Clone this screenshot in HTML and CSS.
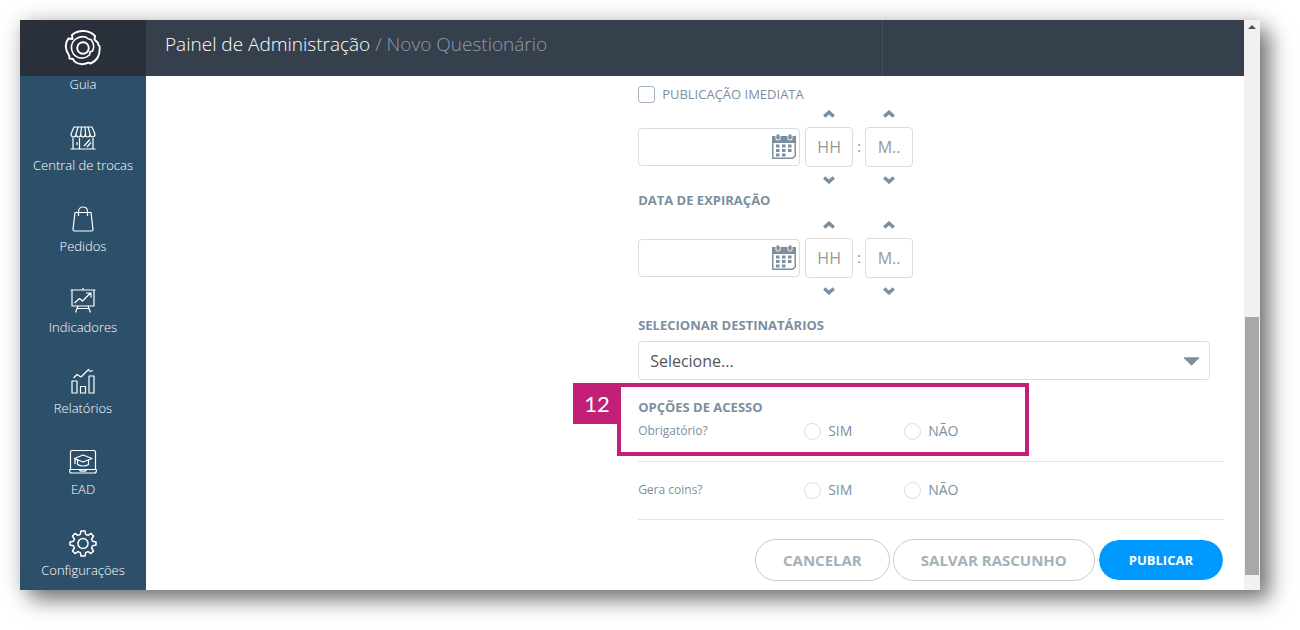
FILE: index.html
```
<!DOCTYPE html>
<html lang="pt-BR">

<head>
    <meta charset="UTF-8">
    <meta name="viewport" content="width=device-width, initial-scale=1.0">
    <title>Novo Questionário</title>
    <link rel="stylesheet" href="styles.css">
</head>

<body>
    <svg class="symbols" width="0" height="0">
        <symbol id="calendar" viewBox="0 0 26 26">
            <path d="M1 3h24v19l-4 3H1z" fill="#fff" />
            <path fill="currentColor" d="M1 2h24v7H1zM1 9h1.500v14.500H20V25H1zM23.500 9H25v13l-3 3h-2v-1.500h1.500l2-2z" />
            <path d="M7 2v2M19 2v2" stroke="#fff" stroke-width="5" stroke-linecap="round" />
            <path d="M7 2v2M19 2v2" stroke="currentColor" stroke-width="3.400" stroke-linecap="round" />
            <path fill="currentColor" d="M5 10.500h3.500v3H5zm6 0h3.500v3H11zm6 0h3.500v3H17zM5 15h3.500v3H5zm6 0h3.500v3H11zm6 0h3.500v3H17zM5 19.500h3.500v3H5zm6 0h3.500v3H11z" />
        </symbol>
        <symbol id="up" viewBox="0 0 12 8">
            <path d="M1.200 6.500L6 2.200l4.800 4.300" fill="none" stroke="currentColor" stroke-width="3.400" />
        </symbol>
        <symbol id="down" viewBox="0 0 12 8">
            <path d="M1.200 1.500L6 5.800l4.800-4.300" fill="none" stroke="currentColor" stroke-width="3.400" />
        </symbol>
    </svg>

    <div class="window">
        <aside class="sidebar">
            <a class="logo" href="#" aria-label="Início">
                <svg width="38" height="38" viewBox="0 0 38 38">
                    <path d="M8 6C14 .500 25 .500 31 7l-.500 3.500 3.500 3.500c.500 1.500-.500 2 1.500 3 1 9-3 15-9 17.500l-2-.800c-5 2.300-10 2-14-1.200l-1.500-2.500-3.500-.500c-.500-2 .500-2-.700-3.500C.500 20 1 13.500 4.500 9.500l4 .500z" stroke-width="1.900" />
                    <path d="M11 10.500C16 6.500 22 7 24.500 10l2.500.500c3 4 3.500 8 1.500 11.500l-2.500 1-.500 3c-5 4.500-12 4-16-1-3.500-5-2.500-11 1.500-14.500z" stroke-width="1.600" />
                    <circle cx="19" cy="19" r="5.800" stroke-width="1.900" />
                </svg>
            </a>
            <nav class="menu">
                <a href="#">Guia</a>
                <a href="#">
                    <svg viewBox="0 0 28 28">
                        <path d="M5 3h18l3 7c0 4-5 4-5 0 0 4-4.700 4-4.700 0 0 4-4.600 4-4.600 0 0 4-4.700 4-4.700 0 0 4-5 4-5 0zM9 3L7 10M12.500 3l-.800 7M16 3l.600 7M19 3l2 7M1.500 25h25M4 14v11M10.500 14v11M24 14v11M8 18v3M15 22l6-6.500M18 23l4-4.500" />
                    </svg>
                    Central de trocas
                </a>
                <a href="#">
                    <svg viewBox="0 0 28 28">
                        <path d="M6 7.500h16l2 17c0 1-.500 1.500-1.500 1.500h-17C4.500 26 4 25.500 4 24.500zM9.500 11V6.500c0-6 9-6 9 0V11" />
                    </svg>
                    Pedidos
                </a>
                <a href="#">
                    <svg viewBox="0 0 28 28">
                        <path d="M1.500 4h25M14 2v2M3 4v16h22V4M9 20l-2.500 6.500M19 20l2.500 6.500M8.500 22.500h11M5.500 17l5-4.500 3 2.500 8-8M17 7h5v4.500" />
                    </svg>
                    Indicadores
                </a>
                <a href="#">
                    <svg viewBox="0 0 28 28">
                        <path d="M3 14h5v12H3zM11.500 19.500h5V26h-5zM20 9h5v17h-5zM4.500 11l3.500-3.500 4 2.500 7.500-7.500 1.500 2 3-1" />
                    </svg>
                    Relatórios
                </a>
                <a href="#">
                    <svg viewBox="0 0 28 28">
                        <path d="M1.500 21V4c0-1 .500-1.500 1.500-1.500h22c1 0 1.500.500 1.500 1.500v17M.700 21.500h26.600v1.500c0 1.500-1 2-2 2H2.700c-1 0-2-.500-2-2zM10.500 22c.500 1.500 6.500 1.500 7 0M5.500 10.500L14 7l9 3.500-9 3.500zM8.500 12v4.500c3 2 8.500 2 11 0V12M6 10.500v5.500" />
                    </svg>
                    EAD
                </a>
                <a href="#">
                    <svg viewBox="0 0 28 28">
                        <path d="M12 2h4l.700 3.400 2.300 1 3-1.900 2.500 2.500-1.900 3 1 2.300L27 13v3l-3.400.700-1 2.300 1.900 3-2.500 2.500-3-1.900-2.300 1L16 27h-4l-.700-3.400-2.300-1-3 1.900L3.500 22l1.900-3-1-2.300L1 16v-3l3.400-.700 1-2.300-1.900-3L6 4.500l3 1.900 2.300-1z" stroke-width="1.500" />
                        <circle cx="14" cy="14.500" r="5" stroke-width="1.500" />
                    </svg>
                    Configurações
                </a>
            </nav>
        </aside>

        <div class="page">
            <header class="topbar">
                <h1>Painel de Administração <span>/ Novo Questionário</span></h1>
                <div class="topbar-side"></div>
            </header>

            <main class="content">
                <form class="form">
                    <label class="check">
                        <input type="checkbox"> PUBLICAÇÃO IMEDIATA
                    </label>

                    <div class="datetime">
                        <div class="date">
                            <input type="text" aria-label="Data de publicação">
                            <svg><use href="#calendar" /></svg>
                        </div>
                        <div class="time">
                            <button type="button" aria-label="Mais horas"><svg><use href="#up" /></svg></button>
                            <input type="text" placeholder="HH" aria-label="Hora">
                            <button type="button" aria-label="Menos horas"><svg><use href="#down" /></svg></button>
                        </div>
                        <span class="colon">:</span>
                        <div class="time">
                            <button type="button" aria-label="Mais minutos"><svg><use href="#up" /></svg></button>
                            <input type="text" placeholder="M.." aria-label="Minuto">
                            <button type="button" aria-label="Menos minutos"><svg><use href="#down" /></svg></button>
                        </div>
                    </div>

                    <label class="title" for="expiracao">DATA DE EXPIRAÇÃO</label>
                    <div class="datetime">
                        <div class="date">
                            <input type="text" id="expiracao">
                            <svg><use href="#calendar" /></svg>
                        </div>
                        <div class="time">
                            <button type="button" aria-label="Mais horas"><svg><use href="#up" /></svg></button>
                            <input type="text" placeholder="HH" aria-label="Hora de expiração">
                            <button type="button" aria-label="Menos horas"><svg><use href="#down" /></svg></button>
                        </div>
                        <span class="colon">:</span>
                        <div class="time">
                            <button type="button" aria-label="Mais minutos"><svg><use href="#up" /></svg></button>
                            <input type="text" placeholder="M.." aria-label="Minuto de expiração">
                            <button type="button" aria-label="Menos minutos"><svg><use href="#down" /></svg></button>
                        </div>
                    </div>

                    <label class="title title-spaced" for="destinatarios">SELECIONAR DESTINATÁRIOS</label>
                    <div class="select">
                        <select id="destinatarios">
                            <option>Selecione...</option>
                        </select>
                        <svg viewBox="0 0 16 9"><path d="M0 0h16v1L8 9 0 1z" fill="currentColor" /></svg>
                    </div>

                    <section class="access">
                        <h2 class="title title-spaced">OPÇÕES DE ACESSO</h2>
                        <div class="option option-first" role="radiogroup" aria-labelledby="obrigatorio">
                            <span class="option-name" id="obrigatorio">Obrigatório?</span>
                            <label><input type="radio" name="obrigatorio"> SIM</label>
                            <label><input type="radio" name="obrigatorio"> NÃO</label>
                        </div>
                        <div class="highlight"><span class="highlight-number">12</span></div>
                    </section>
                    <div class="option" role="radiogroup" aria-labelledby="coins">
                        <span class="option-name" id="coins">Gera coins?</span>
                        <label><input type="radio" name="coins"> SIM</label>
                        <label><input type="radio" name="coins"> NÃO</label>
                    </div>

                    <div class="actions">
                        <button type="button">CANCELAR</button>
                        <button type="button">SALVAR RASCUNHO</button>
                        <button type="submit" class="primary">PUBLICAR</button>
                    </div>
                </form>
            </main>
        </div>

        <div class="scrollbar">
            <svg viewBox="0 0 8 4"><path d="M4 0l4 4H0z" fill="#505050" /></svg>
            <div class="thumb"></div>
        </div>
    </div>
</body>

</html>
```
FILE: styles.css
```
* {
    box-sizing: border-box;
}

body {
    margin: 0;
    padding: 20px 40px 40px 20px;
    min-height: 100vh;
    display: flex;
    background: #fff;
    color: #7b8fa0;
    font-family: "Open Sans", sans-serif;
    font-size: 14px;
    line-height: 20px;
}

input,
select,
button {
    font-family: inherit;
    margin: 0;
}

.symbols {
    position: absolute;
}

.window {
    flex: 1;
    display: flex;
    background: #fff;
    box-shadow: 10px 10px 20px rgba(0, 0, 0, 0.5), 0 0 20px rgba(0, 0, 0, 0.15);
}

/* menu lateral */
.sidebar {
    width: 126px;
    flex-shrink: 0;
    background: #2d506a;
}

.logo {
    display: flex;
    align-items: center;
    justify-content: center;
    height: 56px;
    background: #293039;
}

.sidebar svg {
    fill: none;
    stroke: #fff;
    stroke-width: 1.2;
    stroke-linejoin: round;
}

.menu {
    display: flex;
    flex-direction: column;
    gap: 31px;
    padding-bottom: 10px;
}

.menu a {
    display: flex;
    flex-direction: column;
    align-items: center;
    gap: 5px;
    color: #fff;
    font-size: 13px;
    font-weight: 300;
    line-height: 17px;
    text-decoration: none;
}

.menu svg {
    width: 28px;
    height: 28px;
}

.page {
    flex: 1;
    min-width: 0;
}

.topbar {
    display: flex;
    height: 56px;
    background: #363f4c;
}

.topbar h1 {
    flex: 1;
    margin: 0;
    padding-left: 19px;
    color: #fff;
    font-size: 19px;
    font-weight: 300;
    line-height: 48px;
}

.topbar h1 span {
    color: #8b9eaf;
}

.topbar-side {
    width: 33%;
    border-left: 1px solid #43505e;
}

.content {
    display: grid;
    grid-template-columns: 21fr 25fr;
    padding: 8px 20px 9px 0;
}

.form {
    grid-column: 2;
}

.check {
    display: flex;
    align-items: center;
    gap: 7px;
    margin-bottom: 3px;
    font-size: 13px;
}

input[type="checkbox"],
input[type="radio"] {
    appearance: none;
    width: 17px;
    height: 17px;
    border: 1px solid #d9dcdf;
    background: #fff;
}

input[type="checkbox"] {
    border-color: #a3b1bd;
    border-radius: 3px;
}

input[type="radio"] {
    border-radius: 50%;
}

.title {
    display: block;
    margin: 3px 0 8px;
    font-size: 13px;
    font-weight: 700;
    line-height: 20px;
}

.title-spaced {
    margin: 17px 0 6px;
}

/* data e hora */
.datetime {
    display: flex;
    align-items: center;
}

.date {
    position: relative;
    width: 162px;
    margin-right: 5px;
}

.date input,
.time input {
    width: 100%;
    height: 38px;
    padding: 0 40px 0 10px;
    border: 1px solid #dcdcdc;
    border-radius: 4px;
    color: #555;
    font-size: 16px;
}

.date svg {
    position: absolute;
    top: 6px;
    right: 3px;
    width: 26px;
    height: 26px;
}

.time {
    display: flex;
    flex-direction: column;
    align-items: center;
    gap: 6px;
    width: 48px;
}

.time input {
    height: 40px;
    padding: 0;
    text-align: center;
}

.time input::placeholder {
    color: #999;
}

.time button {
    display: flex;
    align-items: center;
    justify-content: center;
    width: 24px;
    height: 14px;
    padding: 0;
    border: 0;
    background: none;
    color: #7b8fa0;
}

.time button svg {
    width: 12px;
    height: 8px;
}

.colon {
    width: 12px;
    text-align: center;
}

.select {
    position: relative;
    margin-right: 14px;
}

.select select {
    appearance: none;
    display: block;
    width: 100%;
    height: 39px;
    padding: 0 40px 0 11px;
    border: 1px solid #dcdcdc;
    border-radius: 4px;
    background: #fff;
    color: #555;
    font-size: 16px;
}

.select svg {
    position: absolute;
    top: 16px;
    right: 11px;
    width: 15px;
    height: 9px;
}

.access {
    position: relative;
}

.access .title {
    margin-bottom: 0;
}

.option {
    display: flex;
    align-items: center;
    padding: 18px 0 19px;
    border-bottom: 1px solid #e3e5e7;
}

.option-first {
    padding: 4px 0 20px;
}

.option-name {
    width: 166px;
    font-size: 12px;
}

.option label {
    display: flex;
    align-items: center;
    gap: 7px;
    width: 100px;
}

/* destaque do passo, por cima do formulário */
.highlight {
    position: absolute;
    top: -14px;
    left: -21px;
    width: 412px;
    height: 73px;
    border: 4px solid #c12076;
    pointer-events: none;
}

.highlight-number {
    position: absolute;
    top: -4px;
    right: 100%;
    width: 48px;
    height: 41px;
    background: #c12076;
    color: #fff;
    font-family: Lato, sans-serif;
    font-size: 22px;
    line-height: 41px;
    text-align: center;
}

.actions {
    display: flex;
    justify-content: flex-end;
    gap: 3px;
    margin-top: 19px;
}

.actions button {
    height: 42px;
    padding: 0 27px;
    border: 1px solid #c3ccd3;
    border-radius: 21px;
    background: #fff;
    color: #a3b1bb;
    font-size: 15px;
    font-weight: 700;
    line-height: 38px;
}

.actions .primary {
    padding: 0 30px;
    border-color: #fff;
    background: #09f;
    background-clip: padding-box;
    color: #fff;
    font-size: 13px;
}

.scrollbar {
    display: flex;
    flex-direction: column;
    align-items: center;
    justify-content: space-between;
    width: 16px;
    padding: 5px 1px 15px;
    background: #f1f1f1;
}

.scrollbar svg {
    width: 8px;
    height: 4px;
}

.thumb {
    width: 100%;
    height: 47%;
    background: #a8a8a8;
}
```
